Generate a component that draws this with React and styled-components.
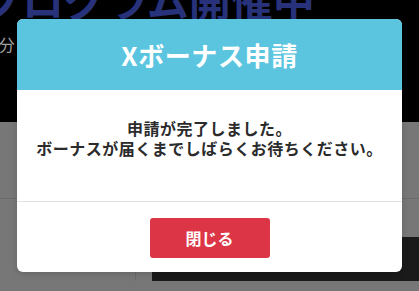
import React from "react";
import styled, { createGlobalStyle } from "styled-components";

const GlobalStyle = createGlobalStyle`
  html, body { margin: 0; padding: 0; }
  body {
    font-family: "Noto Sans CJK JP", "Noto Sans", sans-serif;
    background: #777;
  }
`;

// Page behind the dialog (already dimmed by the backdrop)
const Page = styled.div`
  position: relative;
  width: 419px;
  height: 291px;
  overflow: hidden;
  background: #777;
`;

const Hero = styled.section`
  height: 122px;
  background: #000;
  overflow: hidden;
`;

const HeroTitle = styled.h1`
  margin: -26px 0 0 -20px;
  font-size: 42px;
  line-height: 50px;
  font-weight: 700;
  color: #27327a;
  white-space: nowrap;
`;

const HeroSub = styled.p`
  margin: 8px 0 0 -19px;
  font-size: 16px;
  line-height: 24px;
  color: #a0a0a0;
  white-space: nowrap;
`;

const Lower = styled.div`
  display: grid;
  grid-template-columns: 136px 16px 1fr;
  grid-template-rows: 77px 38px 44px 1fr;
`;

const Divider = styled.div`
  grid-column: 1 / -1;
  border-bottom: 1px solid #6b6b6b;
`;

const SideCol = styled.div`
  grid-column: 1;
  grid-row: 2 / 5;
  border-right: 1px solid #6b6b6b;
`;

const DarkBar = styled.div`
  grid-column: 3;
  grid-row: 3;
  background: #1a1a1a;
`;

// Dialog
const Dialog = styled.div`
  position: absolute;
  top: 19px;
  left: 17px;
  width: 385px;
  border-radius: 6px;
  overflow: hidden;
  background: #fff;
  box-shadow: 0 2px 6px rgba(0, 0, 0, 0.15);
`;

const DialogHeader = styled.div`
  height: 71px;
  background: #5bc5e0;
  display: flex;
  align-items: center;
  justify-content: center;
`;

const DialogTitle = styled.h2`
  margin: 0;
  color: #fff;
  font-size: 26px;
  font-weight: 700;
  letter-spacing: 0.6px;
`;

const DialogBody = styled.div`
  height: 112px;
  padding-top: 28px;
  box-sizing: border-box;
  text-align: center;
  border-bottom: 1px solid #dee2e6;
`;

const Message = styled.p`
  margin: 0;
  font-size: 16px;
  line-height: 20px;
  font-weight: 700;
  letter-spacing: 0.5px;
  color: #2b2b2b;
`;

const DialogFooter = styled.div`
  height: 70px;
  display: flex;
  justify-content: center;
  padding-top: 16px;
  box-sizing: border-box;
`;

const CloseButton = styled.button`
  width: 120px;
  height: 40px;
  border: none;
  border-radius: 3px;
  background: #dc3545;
  color: #fff;
  font-family: inherit;
  font-size: 16px;
  font-weight: 700;
  cursor: pointer;
`;

export default function App() {
  return (
    <>
      <GlobalStyle />
      <Page>
        <Hero>
          <HeroTitle>プログラム開催中</HeroTitle>
          <HeroSub>30分</HeroSub>
        </Hero>
        <Lower>
          <Divider />
          <SideCol />
          <DarkBar />
        </Lower>
        <Dialog>
          <DialogHeader>
            <DialogTitle>Xボーナス申請</DialogTitle>
          </DialogHeader>
          <DialogBody>
            <Message>
              申請が完了しました。
              <br />
              ボーナスが届くまでしばらくお待ちください。
            </Message>
          </DialogBody>
          <DialogFooter>
            <CloseButton>閉じる</CloseButton>
          </DialogFooter>
        </Dialog>
      </Page>
    </>
  );
}
